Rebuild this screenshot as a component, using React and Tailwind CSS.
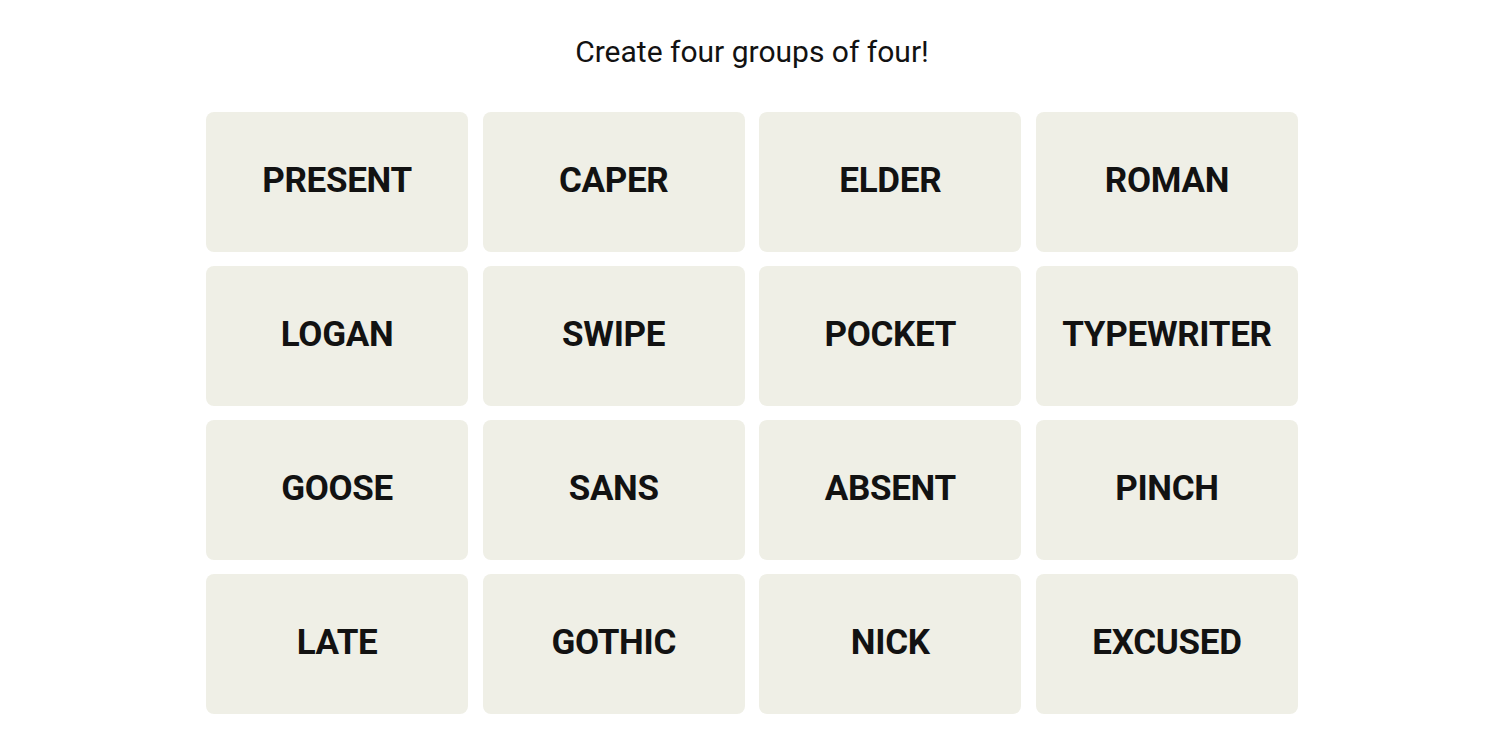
import React from "react";

const words = [
  "PRESENT", "CAPER", "ELDER", "ROMAN",
  "LOGAN", "SWIPE", "POCKET", "TYPEWRITER",
  "GOOSE", "SANS", "ABSENT", "PINCH",
  "LATE", "GOTHIC", "NICK", "EXCUSED",
];

export default function App() {
  return (
    <div className="min-h-screen bg-white flex flex-col items-center pt-[32px] pl-[4px] font-['Roboto','Liberation_Sans',sans-serif] text-[#121212]">
      <p className="text-[30px] leading-[40px] font-normal">Create four groups of four!</p>

      {/* Board */}
      <div className="mt-[40px] w-[1092px] grid grid-cols-4 gap-x-[14.5px] gap-y-[14px]">
        {words.map((w) => (
          <button
            key={w}
            className="h-[140px] rounded-[8px] bg-[#efefe6] flex items-center justify-center pb-[2px] text-[35px] font-bold tracking-[-0.3px] text-[#121212]"
          >
            {w}
          </button>
        ))}
      </div>
    </div>
  );
}
